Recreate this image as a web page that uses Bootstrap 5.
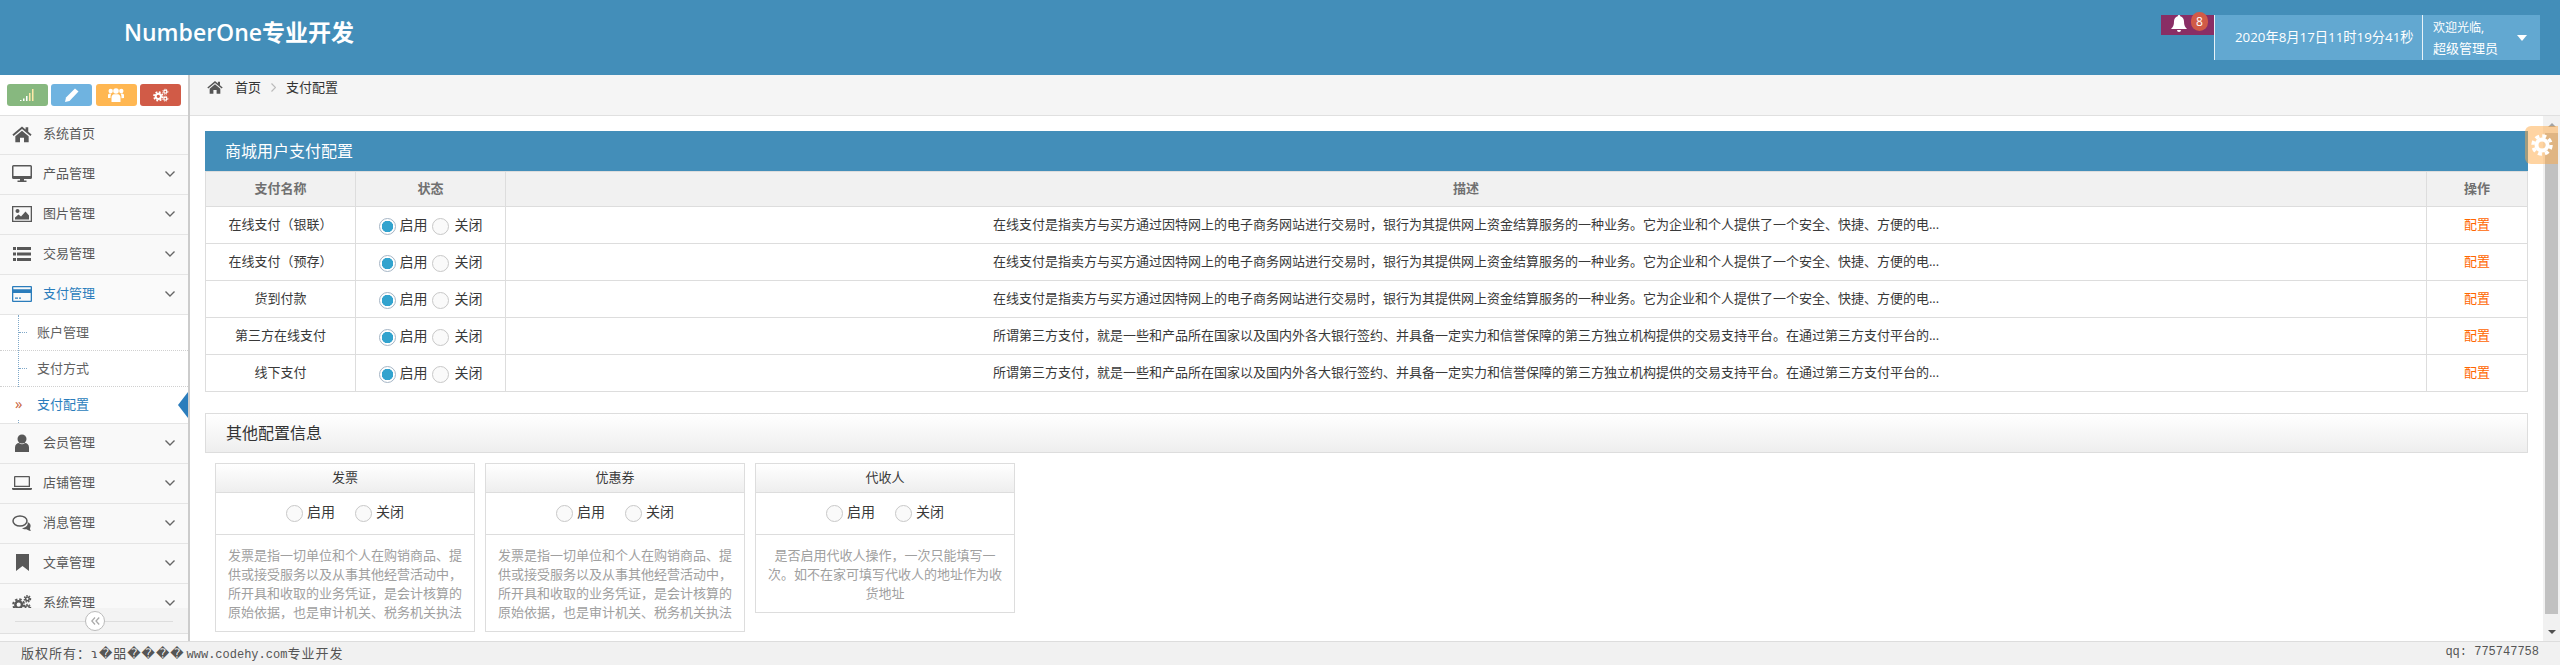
<!DOCTYPE html>
<html lang="zh-CN">
<head>
  <meta charset="UTF-8">
  <title>支付配置</title>
  <meta name="viewport" content="width=device-width, initial-scale=1">
  <link href="https://cdn.jsdelivr.net/npm/bootstrap@5.3.3/dist/css/bootstrap.min.css" rel="stylesheet">
  <style>
    html, body { height: 100%; }
    body {
      overflow: hidden;
      font-family: "Open Sans", "Noto Sans CJK SC", sans-serif;
      font-size: 13px;
      color: #393939;
      background: #fff;
    }
    .app-shell { height: 665px; }

    /* header */
    .top-bar { height: 75px; background: #438eb9; color: #fff; padding: 15px 20px 0 124px; flex: none; }
    .brand-name { font-size: 23px; font-weight: 600; line-height: 34px; margin-top: 0; }
    .bell-box { width: 53px; height: 20px; background: #892e65; position: relative; }
    .bell-box svg { position: absolute; left: 10px; top: 0; width: 16px; height: 18px; }
    .bell-count { position: absolute; left: 30px; top: -3px; width: 17px; height: 19px; border-radius: 9px; background: #d15b47; font-size: 12px; line-height: 19px; text-align: center; }
    .clock-box { width: 208px; height: 45px; background: #62a8d1; border-left: 1px solid #e8f2f8; font-size: 13.3px; line-height: 45px; padding-left: 20px; white-space: nowrap; }
    .user-box { width: 118px; height: 45px; background: #62a8d1; border-left: 1px solid #e8f2f8; padding-left: 10px; position: relative; }
    .user-box .hello { font-size: 12px; line-height: 20px; padding-top: 3px; }
    .user-box .who { font-size: 13px; line-height: 20px; }
    .user-caret { position: absolute; right: 13px; top: 20px; border: 5px solid transparent; border-top: 6px solid #fff; }

    /* sidebar */
    .side-col { width: 190px; flex: none; background: #f2f2f2; border-right: 2px solid #ccc; position: relative; overflow: hidden; }
    .shortcut-row { height: 41px; background: #fff; border-bottom: 1px solid #e0e0e0; padding: 9px 7px 0; gap: 3.6px; }
    .shortcut-btn { width: 41px; height: 22px; border-radius: 3px; display: flex; align-items: center; justify-content: center; color: #fff; }
    .shortcut-btn svg { width: 16px; height: 14px; }
    .sc-green { background: #87b87f; }
    .sc-blue { background: #6fb3e0; }
    .sc-orange { background: #ffb752; }
    .sc-red { background: #d15b47; }
    .menu-row { height: 40px; background: #f9f9f9; border-bottom: 1px solid #e5e5e5; color: #585858; padding: 0 0 2px 12px; }
    .menu-row.first-row { height: 39px; }
    .menu-row.is-open { color: #2b7dbc; background: #fafafa; }
    .menu-ico { width: 20px; height: 18px; flex: none; margin-right: 11px; }
    .menu-chev { width: 10px; height: 6px; margin-left: auto; margin-right: 13px; color: #666; }
    .sub-menu { background: #fff; position: relative; border-bottom: 1px solid #e5e5e5; }
    .sub-menu::before { content: ""; position: absolute; left: 18px; top: 0; bottom: 0; border-left: 1px dotted #7fa8c9; }
    .sub-row { height: 36px; line-height: 34px; padding-left: 37px; color: #616161; position: relative; border-bottom: 1px dotted #d0d0d0; }
    .sub-row:last-child { border-bottom: 0; }
    .sub-row::before { content: ""; position: absolute; left: 19px; top: 17px; width: 8px; border-top: 1px dotted #7fa8c9; }
    .sub-row.is-current { color: #2b7dbc; }
    .sub-row.is-current::before { display: none; }
    .sub-mark { position: absolute; left: 15px; top: 0; color: #c86139; font-size: 15px; line-height: 32px; z-index: 1; background: #fff; }
    .sub-pointer { position: absolute; right: 0; top: 5px; border: 13px solid transparent; border-left-width: 0; border-right: 10px solid #2b7dbc; }
    .side-toggle { position: absolute; left: 0; right: 0; bottom: 0; height: 33px; background: #f3f3f3; }
    .side-toggle .toggle-band { height: 26px; border-bottom: 1px solid #e0e0e0; position: relative; }
    .side-toggle .toggle-band::before { content: ""; position: absolute; left: 15px; right: 15px; top: 13px; border-top: 1px solid #ddd; }
    .toggle-knob { position: absolute; left: 85px; top: 3px; width: 20px; height: 20px; border-radius: 50%; border: 1px solid #bbb; background: #fff; color: #aaa; display: flex; align-items: center; justify-content: center; }
    .toggle-knob svg { width: 9px; height: 8px; }
    .side-tail { height: 7px; background: #fafafa; }

    /* content */
    .crumb-bar { height: 41px; background: #f5f5f5; border-bottom: 1px solid #e0e0e0; padding: 0 0 0 17px; color: #333; line-height: 24px; flex: none; }
    .crumb-bar svg.home-ico { width: 16px; height: 16px; color: #555; margin-right: 12px; }
    .crumb-sep { width: 5px; height: 9px; margin: 0 10px; color: #bbb; }
    .page-main { padding: 15px 15px 0; overflow: hidden; min-width: 0; }
    .panel-head { height: 40px; line-height: 40px; background: #438eb9; color: #fff; font-size: 16px; padding-left: 20px; }
    .pay-table { table-layout: fixed; margin-bottom: 0; border-color: #ddd; font-size: 13px; color: #393939; }
    .pay-table > :not(caption) > * > * { padding: 0; vertical-align: middle; }
    .pay-table th { height: 35px; background: #f1f1f1; color: #707070; font-weight: 600; }
    .pay-table td { height: 37px; }
    .w-name, .w-state { width: 150px; }
    .w-act { width: 101px; }
    .act-link { color: #f60; text-decoration: none; }
    .radio-pair { gap: 4px; }
    .pay-radio.form-check-input { width: 17px; height: 17px; margin: 3px 0 0; background: #fafafa; border: 1px solid #c8c8c8; flex: none; box-shadow: none; }
    .pay-radio.form-check-input:checked { background: radial-gradient(circle, #32a3ce 0, #32a3ce 5.5px, #fff 6px); border-color: #a5b5c5; }
    .radio-text { font-size: 14px; line-height: 20px; }
    .radio-text.with-gap { margin-right: 0; }
    .radio-text.off-text { margin-left: 2px; }
    .other-head { height: 40px; line-height: 38px; margin-top: 21px; padding-left: 20px; border: 1px solid #ddd; background: linear-gradient(#fff, #eee); font-size: 16px; color: #333; }
    .cfg-list { gap: 10px; padding: 10px 0 0 10px; }
    .cfg-card.card { width: 260px; border: 1px solid #ddd; border-radius: 0; color: #393939; }
    .cfg-top { height: 29px; line-height: 27px; text-align: center; background: linear-gradient(#fff, #eee); border-bottom: 1px solid #ddd; }
    .cfg-radios { height: 42px; gap: 20px; border-bottom: 1px solid #ddd; padding-bottom: 3px; }
    .cfg-radios .radio-text { margin-left: 4px; }
    .cfg-text { padding: 11px 12px 9px; line-height: 19px; color: #a0a0a0; text-align: center; }

    /* fake scrollbar */
    .scroll-rail { width: 17px; flex: none; background: #f1f1f1; padding: 0 2px; }
    .rail-up { height: 17px; display: flex; align-items: center; justify-content: center; }
    .rail-thumb { height: 481px; background: #c1c1c1; }
    .rail-down { height: 28px; display: flex; align-items: center; justify-content: center; padding-top: 8px; }
    .tri-up { border: 4px solid transparent; border-top: 0; border-bottom: 4px solid #a3a3a3; }
    .tri-down { border: 4px solid transparent; border-bottom: 0; border-top: 4px solid #505050; }
    .gear-tab { position: absolute; right: 2px; top: 10px; width: 33px; height: 38px; background: rgba(255, 170, 70, .5); border-radius: 6px 0 0 6px; color: #fff; display: flex; align-items: center; justify-content: center; }
    .gear-tab svg { width: 22px; height: 22px; }

    /* footer */
    .foot-bar { height: 24px; flex: none; background: #f1f1f1; border-top: 1px solid #ddd; padding: 0 21px; line-height: 21px; color: #555; font-family: "Liberation Mono", "DejaVu Sans Mono", "Noto Sans CJK SC", monospace; font-size: 12px; white-space: nowrap; }
    .foot-cjk { font-family: "Noto Sans CJK SC", "DejaVu Sans", sans-serif; font-size: 13px; letter-spacing: 1px; }
    .foot-junk { font-family: "DejaVu Sans", "Noto Sans CJK SC", sans-serif; font-size: 13px; letter-spacing: 1px; margin-right: 2px; }
  </style>
</head>
<body>

<svg width="0" height="0" class="position-absolute" aria-hidden="true">
  <symbol id="i-home" viewBox="0 0 24 20"><path fill="currentColor" d="M12 1 0.5 10.6l1.4 1.7L12 3.9l10.1 8.4 1.4-1.7L19.5 7.3V2h-3.2v2.6zM4 12.6 12 6l8 6.6V20h-5.6v-5.4H9.6V20H4z"/></symbol>
  <symbol id="i-desktop" viewBox="0 0 20 18"><path fill="currentColor" fill-rule="evenodd" d="M1.5 0h17A1.5 1.5 0 0 1 20 1.500v11a1.500 1.500 0 0 1-1.500 1.500h-17A1.500 1.500 0 0 1 0 12.500v-11A1.500 1.500 0 0 1 1.500 0zM1.500 1.500v9.500h17V1.500z"/><path fill="currentColor" d="M8 14h4v1.600h2.500V17h-9v-1.400H8z"/></symbol>
  <symbol id="i-image" viewBox="0 0 20 18"><path fill="currentColor" fill-rule="evenodd" d="M0 1h20v16H0zM1.300 2.300v13.400h17.400V2.300z"/><circle fill="currentColor" cx="5.500" cy="6" r="2"/><path fill="currentColor" d="M3 14.500v-2l3.500-3 2.500 2 4.500-5 3.500 4v4z"/></symbol>
  <symbol id="i-list" viewBox="0 0 20 18"><path fill="currentColor" d="M1 2h3v3H1zM5 2h14v3H5zM1 7.500h3v3H1zM5 7.500h14v3H5zM1 13h3v3H1zM5 13h14v3H5z"/></symbol>
  <symbol id="i-card" viewBox="0 0 20 18"><path fill="currentColor" fill-rule="evenodd" d="M1 1h18a1 1 0 0 1 1 1v14a1 1 0 0 1-1 1H1a1 1 0 0 1-1-1V2a1 1 0 0 1 1-1zM1.300 8v7.700h17.400V8zM1.300 2.300v2h17.400v-2z"/><path fill="currentColor" d="M3 12.500h3v1.300H3zM7 12.500h2v1.300H7z"/></symbol>
  <symbol id="i-user" viewBox="0 0 20 18"><circle fill="currentColor" cx="10" cy="5" r="4.500"/><path fill="currentColor" d="M3 18v-4.500C3 10.500 5 9 7 9c1 .8 2 1.200 3 1.200S12 9.800 13 9c2 0 4 1.500 4 4.500V18z"/></symbol>
  <symbol id="i-laptop" viewBox="0 0 20 18"><path fill="currentColor" fill-rule="evenodd" d="M3 2h14a1 1 0 0 1 1 1v10H2V3a1 1 0 0 1 1-1zM3.300 3.300v8.400h13.400V3.300z"/><path fill="currentColor" d="M0 14h20v1.200l-1 .8H1l-1-.8z"/></symbol>
  <symbol id="i-chat" viewBox="0 0 20 18"><ellipse fill="none" stroke="currentColor" stroke-width="1.500" cx="8" cy="7" rx="7" ry="5"/><path fill="currentColor" d="M15.500 8c2.500 1 3.500 3 3 4.800-.2.800-.5 1.200-.5 2.200l.8 2c-2-.3-3.200-1-4.300-1.800-2 .3-3.500-.2-4.500-1.200 3.500 0 6.500-2.500 5.500-6z"/></symbol>
  <symbol id="i-mark" viewBox="0 0 20 18"><path fill="currentColor" d="M4 0h13v17l-6.500-5L4 17z"/></symbol>
  <symbol id="i-cogs" viewBox="0 0 24 20">
    <circle cx="8" cy="12" r="4" fill="none" stroke="currentColor" stroke-width="3"/>
    <circle cx="8" cy="12" r="6.500" fill="none" stroke="currentColor" stroke-width="2.500" stroke-dasharray="2.800 2.300"/>
    <circle cx="18.500" cy="5" r="2.200" fill="none" stroke="currentColor" stroke-width="1.800"/>
    <circle cx="18.500" cy="5" r="3.800" fill="none" stroke="currentColor" stroke-width="1.500" stroke-dasharray="1.800 1.400"/>
    <circle cx="18.500" cy="15.500" r="2.200" fill="none" stroke="currentColor" stroke-width="1.800"/>
    <circle cx="18.500" cy="15.500" r="3.800" fill="none" stroke="currentColor" stroke-width="1.500" stroke-dasharray="1.800 1.400"/>
  </symbol>
  <symbol id="i-chev" viewBox="0 0 10 6"><path fill="none" stroke="currentColor" stroke-width="1.400" d="M.5.5 5 5 9.500.5"/></symbol>
</svg>

<div class="app-shell d-flex flex-column">
  <header class="top-bar d-flex justify-content-between align-items-start">
    <div class="brand-name">NumberOne专业开发</div>
    <div class="d-flex">
      <div class="bell-box">
        <svg viewBox="0 0 16 18"><path fill="#fff" d="M8 0a1.300 1.300 0 0 1 1.300 1.300c2.500.6 3.700 2.700 3.700 5.200 0 4 1 5.500 3 7.500H0c2-2 3-3.500 3-7.500 0-2.500 1.200-4.600 3.700-5.200A1.300 1.300 0 0 1 8 0zM6 15h4a2 2 0 0 1-4 0z"/></svg>
        <span class="bell-count">8</span>
      </div>
      <div class="clock-box">2020年8月17日11时19分41秒</div>
      <div class="user-box">
        <div class="hello">欢迎光临,</div>
        <div class="who">超级管理员</div>
        <span class="user-caret"></span>
      </div>
    </div>
  </header>

  <div class="d-flex flex-grow-1" style="min-height:0">
    <aside class="side-col">
      <div class="shortcut-row d-flex">
        <span class="shortcut-btn sc-green"><svg viewBox="0 0 16 14"><path fill="#fff" d="M1 12h1.500v1H1zM4 10.500h1.500V13H4zM7 8h1.500v5H7z"/><path fill="#ffe9a8" d="M10 5h1.500v8H10zM13 1h1.500v12H13z"/></svg></span>
        <span class="shortcut-btn sc-blue"><svg viewBox="0 0 16 14"><path fill="#fff" d="M11 0.500 14.500 3.500 5.500 13 1 14l1-4.500z"/></svg></span>
        <span class="shortcut-btn sc-orange"><svg viewBox="0 0 16 14"><circle fill="#fff" cx="8" cy="3" r="2.800"/><circle fill="#fff" cx="2.700" cy="3" r="2.200"/><circle fill="#fff" cx="13.300" cy="3" r="2.200"/><path fill="#fff" d="M3.500 14V9.500c0-2 1.300-3.300 2.500-3.300h4c1.200 0 2.500 1.300 2.500 3.300V14zM0 10V7.300c0-1 .8-1.800 1.800-1.800h1.700C2.700 6.500 2.500 7.800 2.500 10zM16 10V7.300c0-1-.8-1.800-1.800-1.800h-1.700c.8 1 1 2.300 1 4.700z"/></svg></span>
        <span class="shortcut-btn sc-red"><svg viewBox="0 0 24 20"><use href="#i-cogs"/></svg></span>
      </div>

      <div class="menu-row first-row d-flex align-items-center"><svg class="menu-ico"><use href="#i-home"/></svg>系统首页</div>
      <div class="menu-row d-flex align-items-center"><svg class="menu-ico"><use href="#i-desktop"/></svg>产品管理<svg class="menu-chev"><use href="#i-chev"/></svg></div>
      <div class="menu-row d-flex align-items-center"><svg class="menu-ico"><use href="#i-image"/></svg>图片管理<svg class="menu-chev"><use href="#i-chev"/></svg></div>
      <div class="menu-row d-flex align-items-center"><svg class="menu-ico"><use href="#i-list"/></svg>交易管理<svg class="menu-chev"><use href="#i-chev"/></svg></div>
      <div class="menu-row is-open d-flex align-items-center"><svg class="menu-ico"><use href="#i-card"/></svg>支付管理<svg class="menu-chev"><use href="#i-chev"/></svg></div>
      <div class="sub-menu">
        <div class="sub-row">账户管理</div>
        <div class="sub-row">支付方式</div>
        <div class="sub-row is-current"><span class="sub-mark">»</span>支付配置<span class="sub-pointer"></span></div>
      </div>
      <div class="menu-row d-flex align-items-center"><svg class="menu-ico"><use href="#i-user"/></svg>会员管理<svg class="menu-chev"><use href="#i-chev"/></svg></div>
      <div class="menu-row d-flex align-items-center"><svg class="menu-ico"><use href="#i-laptop"/></svg>店铺管理<svg class="menu-chev"><use href="#i-chev"/></svg></div>
      <div class="menu-row d-flex align-items-center"><svg class="menu-ico"><use href="#i-chat"/></svg>消息管理<svg class="menu-chev"><use href="#i-chev"/></svg></div>
      <div class="menu-row d-flex align-items-center"><svg class="menu-ico"><use href="#i-mark"/></svg>文章管理<svg class="menu-chev"><use href="#i-chev"/></svg></div>
      <div class="menu-row d-flex align-items-center"><svg class="menu-ico"><use href="#i-cogs"/></svg>系统管理<svg class="menu-chev"><use href="#i-chev"/></svg></div>

      <div class="side-toggle">
        <div class="toggle-band">
          <span class="toggle-knob"><svg viewBox="0 0 9 8"><path fill="none" stroke="currentColor" stroke-width="1.300" d="M4 .5.800 4 4 7.500M8.200.5 5 4l3.200 3.500"/></svg></span>
        </div>
        <div class="side-tail"></div>
      </div>
    </aside>

    <div class="d-flex flex-column flex-grow-1" style="min-width:0">
      <nav class="crumb-bar d-flex align-items-start">
        <svg class="home-ico mt-1"><use href="#i-home"/></svg>
        <span>首页</span>
        <svg class="crumb-sep mt-2" viewBox="0 0 5 9"><path fill="none" stroke="currentColor" stroke-width="1.200" d="M.5.500 4.500 4.500.5 8.500"/></svg>
        <span>支付配置</span>
      </nav>

      <div class="d-flex flex-grow-1 position-relative" style="min-height:0">
        <main class="page-main flex-grow-1">
          <div class="panel-head">商城用户支付配置</div>
          <table class="table table-bordered pay-table text-center">
            <thead>
              <tr><th class="w-name">支付名称</th><th class="w-state">状态</th><th>描述</th><th class="w-act">操作</th></tr>
            </thead>
            <tbody>
              <tr>
                <td>在线支付（银联）</td>
                <td><div class="radio-pair d-flex justify-content-center"><input class="form-check-input pay-radio" type="radio" name="p1" checked><span class="radio-text with-gap">启用</span><input class="form-check-input pay-radio" type="radio" name="p1"><span class="radio-text off-text">关闭</span></div></td>
                <td>在线支付是指卖方与买方通过因特网上的电子商务网站进行交易时，银行为其提供网上资金结算服务的一种业务。它为企业和个人提供了一个安全、快捷、方便的电...</td>
                <td><a href="#" class="act-link">配置</a></td>
              </tr>
              <tr>
                <td>在线支付（预存）</td>
                <td><div class="radio-pair d-flex justify-content-center"><input class="form-check-input pay-radio" type="radio" name="p2" checked><span class="radio-text with-gap">启用</span><input class="form-check-input pay-radio" type="radio" name="p2"><span class="radio-text off-text">关闭</span></div></td>
                <td>在线支付是指卖方与买方通过因特网上的电子商务网站进行交易时，银行为其提供网上资金结算服务的一种业务。它为企业和个人提供了一个安全、快捷、方便的电...</td>
                <td><a href="#" class="act-link">配置</a></td>
              </tr>
              <tr>
                <td>货到付款</td>
                <td><div class="radio-pair d-flex justify-content-center"><input class="form-check-input pay-radio" type="radio" name="p3" checked><span class="radio-text with-gap">启用</span><input class="form-check-input pay-radio" type="radio" name="p3"><span class="radio-text off-text">关闭</span></div></td>
                <td>在线支付是指卖方与买方通过因特网上的电子商务网站进行交易时，银行为其提供网上资金结算服务的一种业务。它为企业和个人提供了一个安全、快捷、方便的电...</td>
                <td><a href="#" class="act-link">配置</a></td>
              </tr>
              <tr>
                <td>第三方在线支付</td>
                <td><div class="radio-pair d-flex justify-content-center"><input class="form-check-input pay-radio" type="radio" name="p4" checked><span class="radio-text with-gap">启用</span><input class="form-check-input pay-radio" type="radio" name="p4"><span class="radio-text off-text">关闭</span></div></td>
                <td>所谓第三方支付，就是一些和产品所在国家以及国内外各大银行签约、并具备一定实力和信誉保障的第三方独立机构提供的交易支持平台。在通过第三方支付平台的...</td>
                <td><a href="#" class="act-link">配置</a></td>
              </tr>
              <tr>
                <td>线下支付</td>
                <td><div class="radio-pair d-flex justify-content-center"><input class="form-check-input pay-radio" type="radio" name="p5" checked><span class="radio-text with-gap">启用</span><input class="form-check-input pay-radio" type="radio" name="p5"><span class="radio-text off-text">关闭</span></div></td>
                <td>所谓第三方支付，就是一些和产品所在国家以及国内外各大银行签约、并具备一定实力和信誉保障的第三方独立机构提供的交易支持平台。在通过第三方支付平台的...</td>
                <td><a href="#" class="act-link">配置</a></td>
              </tr>
            </tbody>
          </table>

          <div class="other-head">其他配置信息</div>
          <div class="cfg-list d-flex align-items-start">
            <div class="card cfg-card">
              <div class="cfg-top">发票</div>
              <div class="cfg-radios d-flex justify-content-center align-items-center">
                <div class="d-flex"><input class="form-check-input pay-radio" type="radio" name="c1"><span class="radio-text">启用</span></div>
                <div class="d-flex"><input class="form-check-input pay-radio" type="radio" name="c1"><span class="radio-text">关闭</span></div>
              </div>
              <div class="cfg-text">发票是指一切单位和个人在购销商品、提供或接受服务以及从事其他经营活动中，所开具和收取的业务凭证，是会计核算的原始依据，也是审计机关、税务机关执法</div>
            </div>
            <div class="card cfg-card">
              <div class="cfg-top">优惠券</div>
              <div class="cfg-radios d-flex justify-content-center align-items-center">
                <div class="d-flex"><input class="form-check-input pay-radio" type="radio" name="c2"><span class="radio-text">启用</span></div>
                <div class="d-flex"><input class="form-check-input pay-radio" type="radio" name="c2"><span class="radio-text">关闭</span></div>
              </div>
              <div class="cfg-text">发票是指一切单位和个人在购销商品、提供或接受服务以及从事其他经营活动中，所开具和收取的业务凭证，是会计核算的原始依据，也是审计机关、税务机关执法</div>
            </div>
            <div class="card cfg-card">
              <div class="cfg-top">代收人</div>
              <div class="cfg-radios d-flex justify-content-center align-items-center">
                <div class="d-flex"><input class="form-check-input pay-radio" type="radio" name="c3"><span class="radio-text">启用</span></div>
                <div class="d-flex"><input class="form-check-input pay-radio" type="radio" name="c3"><span class="radio-text">关闭</span></div>
              </div>
              <div class="cfg-text">是否启用代收人操作，一次只能填写一次。如不在家可填写代收人的地址作为收货地址</div>
            </div>
          </div>
        </main>

        <div class="scroll-rail" aria-hidden="true">
          <div class="rail-up"><span class="tri-up"></span></div>
          <div class="rail-thumb"></div>
          <div class="rail-down"><span class="tri-down"></span></div>
        </div>
        <div class="gear-tab">
          <svg viewBox="0 0 22 22"><circle cx="11" cy="11" r="5.500" fill="none" stroke="currentColor" stroke-width="4"/><circle cx="11" cy="11" r="9" fill="none" stroke="currentColor" stroke-width="3.500" stroke-dasharray="4 3.070"/></svg>
        </div>
      </div>
    </div>
  </div>

  <footer class="foot-bar d-flex justify-content-between">
    <div><span class="foot-cjk">版权所有：</span><span class="foot-junk">ɿ�㗊����</span>www.codehy.com<span class="foot-cjk">专业开发</span></div>
    <div>qq: 775747758</div>
  </footer>
</div>

<script src="https://cdn.jsdelivr.net/npm/bootstrap@5.3.3/dist/js/bootstrap.bundle.min.js"></script>
</body>
</html>
